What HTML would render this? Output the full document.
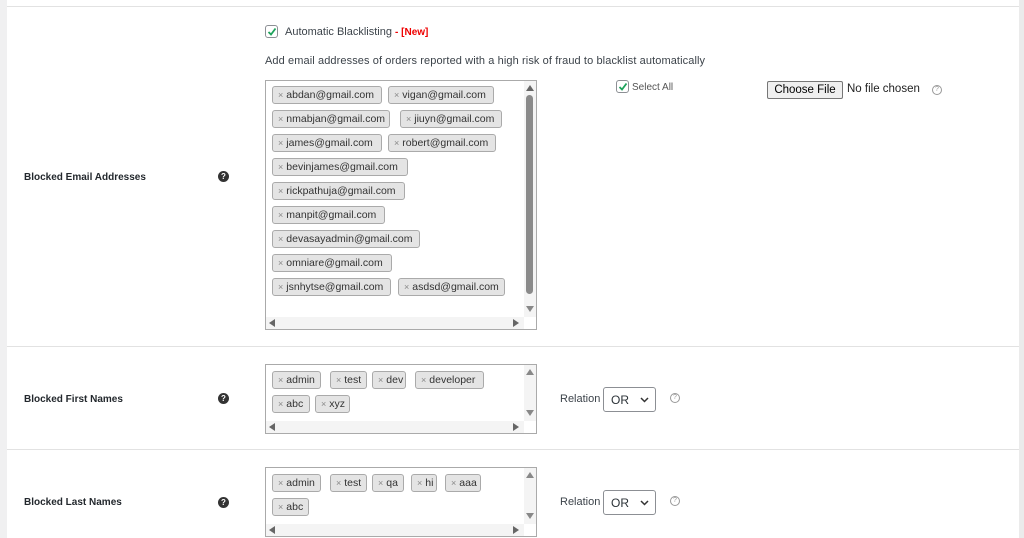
<!DOCTYPE html>
<html><head><meta charset="utf-8"><style>
*{box-sizing:border-box;margin:0;padding:0}
body{width:1024px;height:538px;overflow:hidden;background:#fff;font-family:"Liberation Sans",sans-serif;color:#3c434a;position:relative}
.a{position:absolute}
.lg{left:0;top:0;width:7px;height:538px;background:#f0f0f1}
.rg{left:1019px;top:0;width:5px;height:538px;background:#ebebeb}
.hl{left:7px;width:1012px;height:1px;background:#e2e2e2}
.lab{font-size:10px;font-weight:bold;color:#23282d;left:24px}
.q{width:11px;height:11px;border-radius:50%;background:#333;color:#fff;font-size:8px;font-weight:bold;text-align:center;line-height:11px;left:218px}
.box{border:1px solid #aaa;background:#fff;left:265px;width:272px}
.tag{position:absolute;height:18px;border:1px solid #aaa;border-radius:3px;background:#e4e4e4;font-size:10.5px;line-height:16px;padding-left:5px;color:#333;white-space:nowrap;overflow:hidden}
.tag i{font-style:normal;color:#888;font-size:9px;margin-right:3px}
.vs{position:absolute;right:0;top:0;width:12px;background:#f4f4f4}
.hs{position:absolute;left:0;bottom:0;height:12px;background:#f4f4f4;width:258px}
.tri{position:absolute;width:0;height:0}
.cb{width:13px;height:13px;border:1px solid #8c8f94;border-radius:3px;background:#fff}
.cb svg{position:absolute;left:1px;top:1px}
.hq{width:10px;height:10px;border:1px solid #999;border-radius:50%;font-size:7px;color:#999;text-align:center;line-height:8px}
.sel{border:1px solid #8c8f94;border-radius:3px;width:53px;height:25px;font-size:12px;padding:5px 0 0 7px;color:#2c3338;background:#fff}
</style></head><body>
<div class="a lg"></div><div class="a rg"></div>
<div class="a hl" style="top:6px"></div>
<div class="a hl" style="top:346px"></div>
<div class="a hl" style="top:449px"></div>

<div class="a cb" style="left:265px;top:25px"><svg width="10" height="10" viewBox="0 0 10 10"><path d="M1.5 5 L4 7.5 L8.5 1.5" stroke="#1ea35c" stroke-width="1.8" fill="none"/></svg></div>
<div class="a" style="left:285px;top:26px;font-size:11px;color:#3c434a">Automatic Blacklisting <b style="color:#e00;font-size:10px">- [New]</b></div>
<div class="a" style="left:265px;top:55px;font-size:11px;letter-spacing:0.1px;color:#3c434a">Add email addresses of orders reported with a high risk of fraud to blacklist automatically</div>

<div class="a lab" style="top:172px">Blocked Email Addresses</div>
<div class="a q" style="top:171px">?</div>

<div class="a box" style="top:80px;height:250px">
 <div class="vs" style="height:236px"><div class="tri" style="left:2px;top:4px;border:4px solid transparent;border-bottom:6px solid #666;border-top:0"></div><div style="position:absolute;left:2px;top:14px;width:7px;height:199px;border-radius:4px;background:#8a8a8a"></div><div class="tri" style="left:2px;top:225px;border:4px solid transparent;border-top:6px solid #888;border-bottom:0"></div></div>
 <div class="hs"><div class="tri" style="left:3px;top:2px;border:4px solid transparent;border-right:6px solid #666;border-left:0"></div><div class="tri" style="left:247px;top:2px;border:4px solid transparent;border-left:6px solid #666;border-right:0"></div></div>
</div>
<div class="tag" style="left:272px;top:86px;width:110px"><i>×</i>abdan@gmail.com</div>
<div class="tag" style="left:388px;top:86px;width:106px"><i>×</i>vigan@gmail.com</div>
<div class="tag" style="left:272px;top:110px;width:118px"><i>×</i>nmabjan@gmail.com</div>
<div class="tag" style="left:400px;top:110px;width:102px"><i>×</i>jiuyn@gmail.com</div>
<div class="tag" style="left:272px;top:134px;width:110px"><i>×</i>james@gmail.com</div>
<div class="tag" style="left:388px;top:134px;width:108px"><i>×</i>robert@gmail.com</div>
<div class="tag" style="left:272px;top:158px;width:136px"><i>×</i>bevinjames@gmail.com</div>
<div class="tag" style="left:272px;top:182px;width:133px"><i>×</i>rickpathuja@gmail.com</div>
<div class="tag" style="left:272px;top:206px;width:113px"><i>×</i>manpit@gmail.com</div>
<div class="tag" style="left:272px;top:230px;width:148px"><i>×</i>devasayadmin@gmail.com</div>
<div class="tag" style="left:272px;top:254px;width:120px"><i>×</i>omniare@gmail.com</div>
<div class="tag" style="left:272px;top:278px;width:119px"><i>×</i>jsnhytse@gmail.com</div>
<div class="tag" style="left:398px;top:278px;width:107px"><i>×</i>asdsd@gmail.com</div>

<div class="a cb" style="left:616px;top:80px"><svg width="10" height="10" viewBox="0 0 10 10"><path d="M1.5 5 L4 7.5 L8.5 1.5" stroke="#1ea35c" stroke-width="1.8" fill="none"/></svg></div>
<div class="a" style="left:632px;top:82px;font-size:10px;color:#555">Select All</div>
<div class="a" style="left:767px;top:81px;width:76px;height:18px;border:1px solid #767676;border-radius:2px;background:#efefef;font-size:11.5px;color:#000;text-align:center;line-height:16px">Choose File</div>
<div class="a" style="left:847px;top:83px;font-size:11.5px;color:#222">No file chosen</div>
<div class="a hq" style="left:932px;top:85px">?</div>

<div class="a lab" style="top:394px">Blocked First Names</div>
<div class="a q" style="top:393px">?</div>
<div class="a box" style="top:364px;height:70px">
 <div class="vs" style="height:56px"><div class="tri" style="left:2px;top:4px;border:4px solid transparent;border-bottom:6px solid #888;border-top:0"></div><div class="tri" style="left:2px;top:45px;border:4px solid transparent;border-top:6px solid #888;border-bottom:0"></div></div>
 <div class="hs"><div class="tri" style="left:3px;top:2px;border:4px solid transparent;border-right:6px solid #666;border-left:0"></div><div class="tri" style="left:247px;top:2px;border:4px solid transparent;border-left:6px solid #666;border-right:0"></div></div>
</div>
<div class="tag" style="left:272px;top:371px;width:49px"><i>×</i>admin</div>
<div class="tag" style="left:330px;top:371px;width:37px"><i>×</i>test</div>
<div class="tag" style="left:372px;top:371px;width:34px"><i>×</i>dev</div>
<div class="tag" style="left:415px;top:371px;width:69px"><i>×</i>developer</div>
<div class="tag" style="left:272px;top:395px;width:38px"><i>×</i>abc</div>
<div class="tag" style="left:315px;top:395px;width:35px"><i>×</i>xyz</div>
<div class="a" style="left:560px;top:393px;font-size:11px">Relation</div>
<div class="a sel" style="left:603px;top:387px">OR<svg style="position:absolute;left:36px;top:9px" width="9" height="6" viewBox="0 0 9 6"><path d="M1 1 L4.5 4.5 L8 1" stroke="#333" stroke-width="1.5" fill="none"/></svg></div>
<div class="a hq" style="left:670px;top:393px">?</div>

<div class="a lab" style="top:497px">Blocked Last Names</div>
<div class="a q" style="top:497px">?</div>
<div class="a box" style="top:467px;height:70px">
 <div class="vs" style="height:56px"><div class="tri" style="left:2px;top:4px;border:4px solid transparent;border-bottom:6px solid #888;border-top:0"></div><div class="tri" style="left:2px;top:45px;border:4px solid transparent;border-top:6px solid #888;border-bottom:0"></div></div>
 <div class="hs"><div class="tri" style="left:3px;top:2px;border:4px solid transparent;border-right:6px solid #666;border-left:0"></div><div class="tri" style="left:247px;top:2px;border:4px solid transparent;border-left:6px solid #666;border-right:0"></div></div>
</div>
<div class="tag" style="left:272px;top:474px;width:49px"><i>×</i>admin</div>
<div class="tag" style="left:330px;top:474px;width:37px"><i>×</i>test</div>
<div class="tag" style="left:372px;top:474px;width:32px"><i>×</i>qa</div>
<div class="tag" style="left:411px;top:474px;width:26px"><i>×</i>hi</div>
<div class="tag" style="left:445px;top:474px;width:36px"><i>×</i>aaa</div>
<div class="tag" style="left:272px;top:498px;width:37px"><i>×</i>abc</div>
<div class="a" style="left:560px;top:496px;font-size:11px">Relation</div>
<div class="a sel" style="left:603px;top:490px">OR<svg style="position:absolute;left:36px;top:9px" width="9" height="6" viewBox="0 0 9 6"><path d="M1 1 L4.5 4.5 L8 1" stroke="#333" stroke-width="1.5" fill="none"/></svg></div>
<div class="a hq" style="left:670px;top:496px">?</div>
</body></html>
